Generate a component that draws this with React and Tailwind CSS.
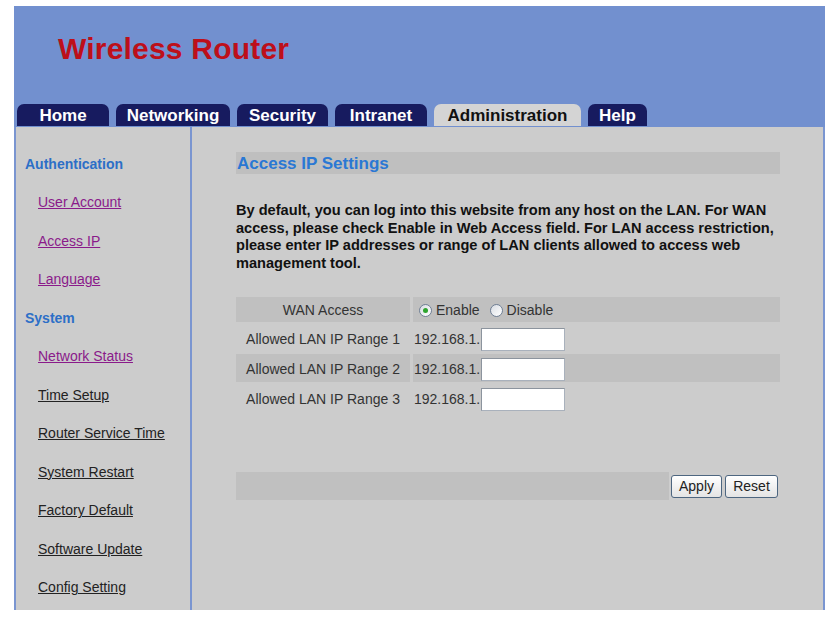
import React from "react";

const tabs = [
  { name: "Home", w: "w-[92px]" },
  { name: "Networking", w: "w-[114px]" },
  { name: "Security", w: "w-[91px]" },
  { name: "Intranet", w: "w-[92px]" },
  { name: "Administration", w: "w-[147px]", active: true },
  { name: "Help", w: "w-[59px]" },
];

const menu = [
  { label: "Authentication", head: true },
  { label: "User Account", visited: true },
  { label: "Access IP", visited: true },
  { label: "Language", visited: true },
  { label: "System", head: true },
  { label: "Network Status", visited: true },
  { label: "Time Setup" },
  { label: "Router Service Time" },
  { label: "System Restart" },
  { label: "Factory Default" },
  { label: "Software Update" },
  { label: "Config Setting" },
];

const Radio = ({ checked, label }) => (
  <span className="flex items-center gap-[4px]">
    <span className="w-[13px] h-[13px] rounded-full border border-[#6f7f95] bg-gradient-to-br from-[#d9dde3] to-white flex items-center justify-center">
      {checked && <span className="w-[5px] h-[5px] rounded-full bg-[#2fa52f]" />}
    </span>
    <span>{label}</span>
  </span>
);

const IpInput = () => (
  <span className="flex items-center">
    <span>192.168.1.</span>
    <span className="ml-[1px] w-[84px] h-[23px] bg-white border border-[#a9b1bc] border-t-[#8c949e] border-l-[#8c949e]" />
  </span>
);

const Btn = ({ children, w }) => (
  <button
    className={`${w} h-[23px] rounded-[3px] border border-[#4d6680] bg-gradient-to-b from-white to-[#e4e4e4] text-[14px] text-[#222] leading-none`}
  >
    {children}
  </button>
);

export default function App() {
  const rows = [
    { label: "WAN Access", dark: true, h: "h-[25px]", value: (
      <span className="flex items-center gap-[10px] pl-[5px]">
        <Radio checked label="Enable" />
        <Radio label="Disable" />
      </span>
    ) },
    { label: "Allowed LAN IP Range 1", h: "h-[28px]", value: <IpInput /> },
    { label: "Allowed LAN IP Range 2", dark: true, h: "h-[28px]", value: <IpInput /> },
    { label: "Allowed LAN IP Range 3", h: "h-[28px]", value: <IpInput /> },
  ];

  return (
    <div
      className="w-[840px] h-[620px] bg-white pt-[6px] pl-[14px]"
      style={{ fontFamily: '"Liberation Sans", Arial, sans-serif' }}
    >
      <div className="w-[811px]">
        <header className="h-[121px] bg-[#7290cf] flex flex-col justify-between">
          <div className="pl-[44px] pt-[28px] text-[30px] leading-none font-bold text-[#bd0f1a] tracking-[0.2px]">
            Wireless Router
          </div>
          <nav className="flex items-end gap-[7px] pl-[3px] mb-[1px]">
            {tabs.map((t) => (
              <div
                key={t.name}
                className={`${t.w} h-[22px] rounded-t-[7px] flex items-center justify-center text-[17px] font-bold leading-none pt-[1px] ${
                  t.active ? "bg-[#d4d4d4] text-[#111]" : "bg-[#171b5f] text-white"
                }`}
              >
                {t.name}
              </div>
            ))}
          </nav>
        </header>

        <div className="flex h-[483px] bg-[#cccccc]">
          <aside className="w-[178px] border-l-[2px] border-r-[2px] border-[#7a95d0] pt-[18px]">
            {menu.map((m) =>
              m.head ? (
                <div
                  key={m.label}
                  className="h-[38.5px] flex items-center pl-[9px] text-[14px] font-bold text-[#2c6fc7]"
                >
                  {m.label}
                </div>
              ) : (
                <div key={m.label} className="h-[38.5px] flex items-center pl-[22px]">
                  <a
                    href="#"
                    className={`text-[14px] underline ${
                      m.visited ? "text-[#8a1a8a]" : "text-[#222]"
                    }`}
                  >
                    {m.label}
                  </a>
                </div>
              )
            )}
          </aside>

          <main className="flex-1 border-r-[2px] border-[#7a95d0] pt-[25px] pl-[44px] pr-[43px]">
            <div className="h-[22px] bg-[#bfbfbf] flex items-center pl-[1px] pt-[1px] text-[17px] font-bold text-[#2a78d4]">
              Access IP Settings
            </div>

            <p className="mt-[28px] text-[14.6px] leading-[17.5px] font-bold text-[#111]">
              By default, you can log into this website from any host on the LAN. For WAN
              <br />
              access, please check Enable in Web Access field. For LAN access restriction,
              <br />
              please enter IP addresses or range of LAN clients allowed to access web
              <br />
              management tool.
            </p>

            <div className="mt-[25px] flex flex-col gap-[2px] text-[14px] text-[#333]">
              {rows.map((r) => (
                <div key={r.label} className={`flex gap-[3px] ${r.h}`}>
                  <div
                    className={`w-[174px] flex items-center justify-center pt-[2px] ${
                      r.dark ? "bg-[#c0c0c0]" : ""
                    }`}
                  >
                    {r.label}
                  </div>
                  <div
                    className={`flex-1 flex items-center pl-[1px] pt-[2px] ${
                      r.dark ? "bg-[#c0c0c0]" : ""
                    }`}
                  >
                    {r.value}
                  </div>
                </div>
              ))}
            </div>

            <div className="mt-[60px] flex h-[28px]">
              <div className="flex-1 bg-[#c0c0c0]" />
              <div className="flex items-center gap-[3px] px-[2px] bg-[#cdcdcd]">
                <Btn w="w-[51px]">Apply</Btn>
                <Btn w="w-[53px]">Reset</Btn>
              </div>
            </div>
          </main>
        </div>
      </div>
    </div>
  );
}
